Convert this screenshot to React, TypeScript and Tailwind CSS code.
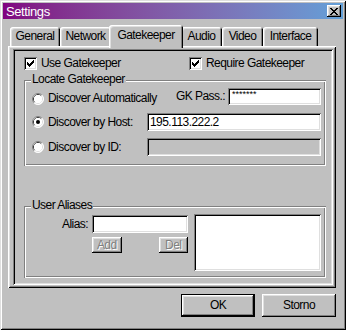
import React from "react";

const raised =
  "shadow-[inset_-1px_-1px_0_#000,inset_1px_1px_0_#fff,inset_-2px_-2px_0_#808080,inset_2px_2px_0_#dfdfdf]";
const sunken =
  "shadow-[inset_1px_1px_0_#808080,inset_-1px_-1px_0_#fff,inset_2px_2px_0_#000,inset_-2px_-2px_0_#dfdfdf]";
const etched =
  "shadow-[inset_1px_1px_0_#808080,inset_-1px_-1px_0_#fff,inset_2px_2px_0_#fff,inset_-2px_-2px_0_#808080]";

function Px({ rects, w, h }: { rects: number[][]; w: number; h: number }) {
  return (
    <svg width={w} height={h} viewBox={`0 0 ${w} ${h}`} shapeRendering="crispEdges">
      {rects.map(([x, y, rw], i) => (
        <rect key={i} x={x} y={y} width={rw} height={1} fill="#000" />
      ))}
    </svg>
  );
}

const checkRects = [
  [9, 3, 1],
  [8, 4, 2],
  [3, 5, 1],
  [7, 5, 3],
  [3, 6, 2],
  [6, 6, 3],
  [3, 7, 5],
  [4, 8, 3],
  [5, 9, 1],
];

const closeRects = [
  [0, 0, 2],
  [6, 0, 2],
  [1, 1, 2],
  [5, 1, 2],
  [2, 2, 4],
  [3, 3, 2],
  [2, 4, 4],
  [1, 5, 2],
  [5, 5, 2],
  [0, 6, 2],
  [6, 6, 2],
];

function CheckBox({ checked }: { checked: boolean }) {
  return (
    <span className={`w-[13px] h-[13px] bg-white shrink-0 block ${sunken}`}>
      {checked && <Px rects={checkRects} w={13} h={13} />}
    </span>
  );
}

function Radio({ checked }: { checked: boolean }) {
  return (
    <svg width={12} height={12} viewBox="0 0 12 12" className="shrink-0">
      <circle cx={6} cy={6} r={5.5} fill="#fff" />
      <path d="M2.11 9.89 A5.5 5.5 0 0 1 9.89 2.11" fill="none" stroke="#808080" strokeWidth={1} />
      <path d="M9.89 2.11 A5.5 5.5 0 0 1 2.11 9.89" fill="none" stroke="#ffffff" strokeWidth={1} />
      <path d="M2.82 9.18 A4.5 4.5 0 0 1 9.18 2.82" fill="none" stroke="#404040" strokeWidth={1} />
      <path d="M9.18 2.82 A4.5 4.5 0 0 1 2.82 9.18" fill="none" stroke="#dfdfdf" strokeWidth={1} />
      <circle cx={6} cy={6} r={4} fill="#fff" />
      {checked && <circle cx={6} cy={6} r={2} fill="#000" />}
    </svg>
  );
}

function Tab({ label, w, selected }: { label: string; w: string; selected?: boolean }) {
  if (selected) {
    return (
      <div
        className={`${w} h-[23px] -mb-[2px] -mx-[2px] relative z-10 bg-[#c0c0c0] rounded-t-[3px] flex items-start justify-center pt-[3px] shadow-[inset_1px_1px_0_#fff,inset_-1px_0_0_#000,inset_2px_2px_0_#dfdfdf,inset_-2px_0_0_#808080]`}
      >
        {label}
      </div>
    );
  }
  return (
    <div
      className={`${w} h-[19px] bg-[#c0c0c0] rounded-t-[3px] flex items-center justify-center shadow-[inset_1px_1px_0_#fff,inset_-1px_0_0_#000,inset_2px_2px_0_#dfdfdf,inset_-2px_0_0_#808080]`}
    >
      {label}
    </div>
  );
}

export default function App() {
  return (
    <div className="w-[346px] h-[330px] bg-[#c0c0c0] p-[3px] text-[12px] leading-[15px] tracking-[-0.55px] whitespace-nowrap text-black font-['Liberation_Sans',Arial,sans-serif] shadow-[inset_1px_1px_0_#dfdfdf,inset_-1px_-1px_0_#000,inset_2px_2px_0_#fff,inset_-2px_-2px_0_#808080]">
      {/* Title bar */}
      <div className="h-[16px] flex items-center bg-linear-to-r from-[#800080] to-[#62a0d8] pl-[3px] pr-[2px]">
        <span className="text-white text-[13px] tracking-[-0.4px]">Settings</span>
        <div className={`ml-auto w-[14px] h-[12px] bg-[#c0c0c0] flex items-center justify-center ${raised}`}>
          <Px rects={closeRects} w={8} h={7} />
        </div>
      </div>

      {/* Tabs */}
      <div className="mt-[6px] ml-[7px] h-[21px] flex items-end">
        <Tab label="General" w="w-[50px]" />
        <Tab label="Network" w="w-[51px]" />
        <Tab label="Gatekeeper" w="w-[74px]" selected />
        <Tab label="Audio" w="w-[41px]" />
        <Tab label="Video" w="w-[41px]" />
        <Tab label="Interface" w="w-[55px]" />
      </div>

      {/* Panel */}
      <div className="ml-[5px] w-[328px] h-[242px] shadow-[inset_1px_1px_0_#fff,inset_-1px_-1px_0_#000,inset_2px_2px_0_#dfdfdf,inset_-2px_-2px_0_#808080] pt-[3px] pl-[5px]">
        <div className={`w-[320px] h-[236px] pl-[11px] pt-[8px] ${sunken}`}>
          <div className="h-[13px] flex items-center">
            <div className="w-[165px] flex items-center">
              <CheckBox checked />
              <span className="ml-[4px]">Use Gatekeeper</span>
            </div>
            <CheckBox checked />
            <span className="ml-[4px]">Require Gatekeeper</span>
          </div>

          {/* Locate Gatekeeper */}
          <div className={`mt-[10px] w-[302px] h-[86px] relative pl-[8px] pr-[5px] pt-[8px] ${etched}`}>
            <span className="absolute left-[7px] -top-[8px] px-[1px] bg-[#c0c0c0]">Locate Gatekeeper</span>
            <div className="h-[17px] flex items-center">
              <div className="mt-[4px] flex items-center">
                <Radio checked={false} />
                <span className="ml-[4px]">Discover Automatically</span>
              </div>
              <div className="ml-auto flex items-center">
                <span className="mr-[3px]">GK Pass.:</span>
                <div className={`w-[93px] h-[17px] bg-white pl-[4px] text-[9px] leading-[12px] tracking-normal ${sunken}`}>*******</div>
              </div>
            </div>
            <div className="mt-[8px] h-[18px] flex items-center">
              <div className="w-[115px] flex items-center">
                <Radio checked />
                <span className="ml-[4px]">Discover by Host:</span>
              </div>
              <div className={`w-[174px] h-[18px] bg-white pl-[3px] flex items-center ${sunken}`}>195.113.222.2</div>
            </div>
            <div className="mt-[7px] h-[18px] flex items-center">
              <div className="w-[115px] flex items-center">
                <Radio checked={false} />
                <span className="ml-[4px]">Discover by ID:</span>
              </div>
              <div className={`w-[174px] h-[18px] bg-[#c0c0c0] ${sunken}`} />
            </div>
          </div>

          {/* User Aliases */}
          <div className={`mt-[40px] w-[302px] h-[72px] relative pt-[8px] flex ${etched}`}>
            <span className="absolute left-[7px] -top-[8px] px-[1px] bg-[#c0c0c0]">User Aliases</span>
            <div className="w-[164px]">
              <div className="mt-[1px] h-[18px] flex items-center">
                <span className="w-[64px] text-right">Alias:</span>
                <div className={`ml-[4px] w-[96px] h-[18px] bg-white ${sunken}`} />
              </div>
              <div className="mt-[4px] flex">
                <div className={`ml-[68px] w-[30px] h-[16px] flex items-center justify-center text-[#808080] [text-shadow:1px_1px_0_#fff] ${raised}`}>
                  Add
                </div>
                <div className={`ml-[37px] w-[30px] h-[16px] flex items-center justify-center text-[#808080] [text-shadow:1px_1px_0_#fff] ${raised}`}>
                  Del
                </div>
              </div>
            </div>
            <div className={`ml-[6px] w-[127px] h-[57px] bg-white ${sunken}`} />
          </div>
        </div>
      </div>

      {/* Bottom buttons */}
      <div className="mt-[6px] pr-[7px] flex justify-end gap-[7px]">
        <div className="w-[74px] h-[23px] flex items-center justify-center shadow-[inset_0_0_0_1px_#000,inset_-2px_-2px_0_#000,inset_2px_2px_0_#fff,inset_-3px_-3px_0_#808080,inset_3px_3px_0_#dfdfdf]">
          OK
        </div>
        <div className={`w-[74px] h-[23px] flex items-center justify-center ${raised}`}>Storno</div>
      </div>
    </div>
  );
}
